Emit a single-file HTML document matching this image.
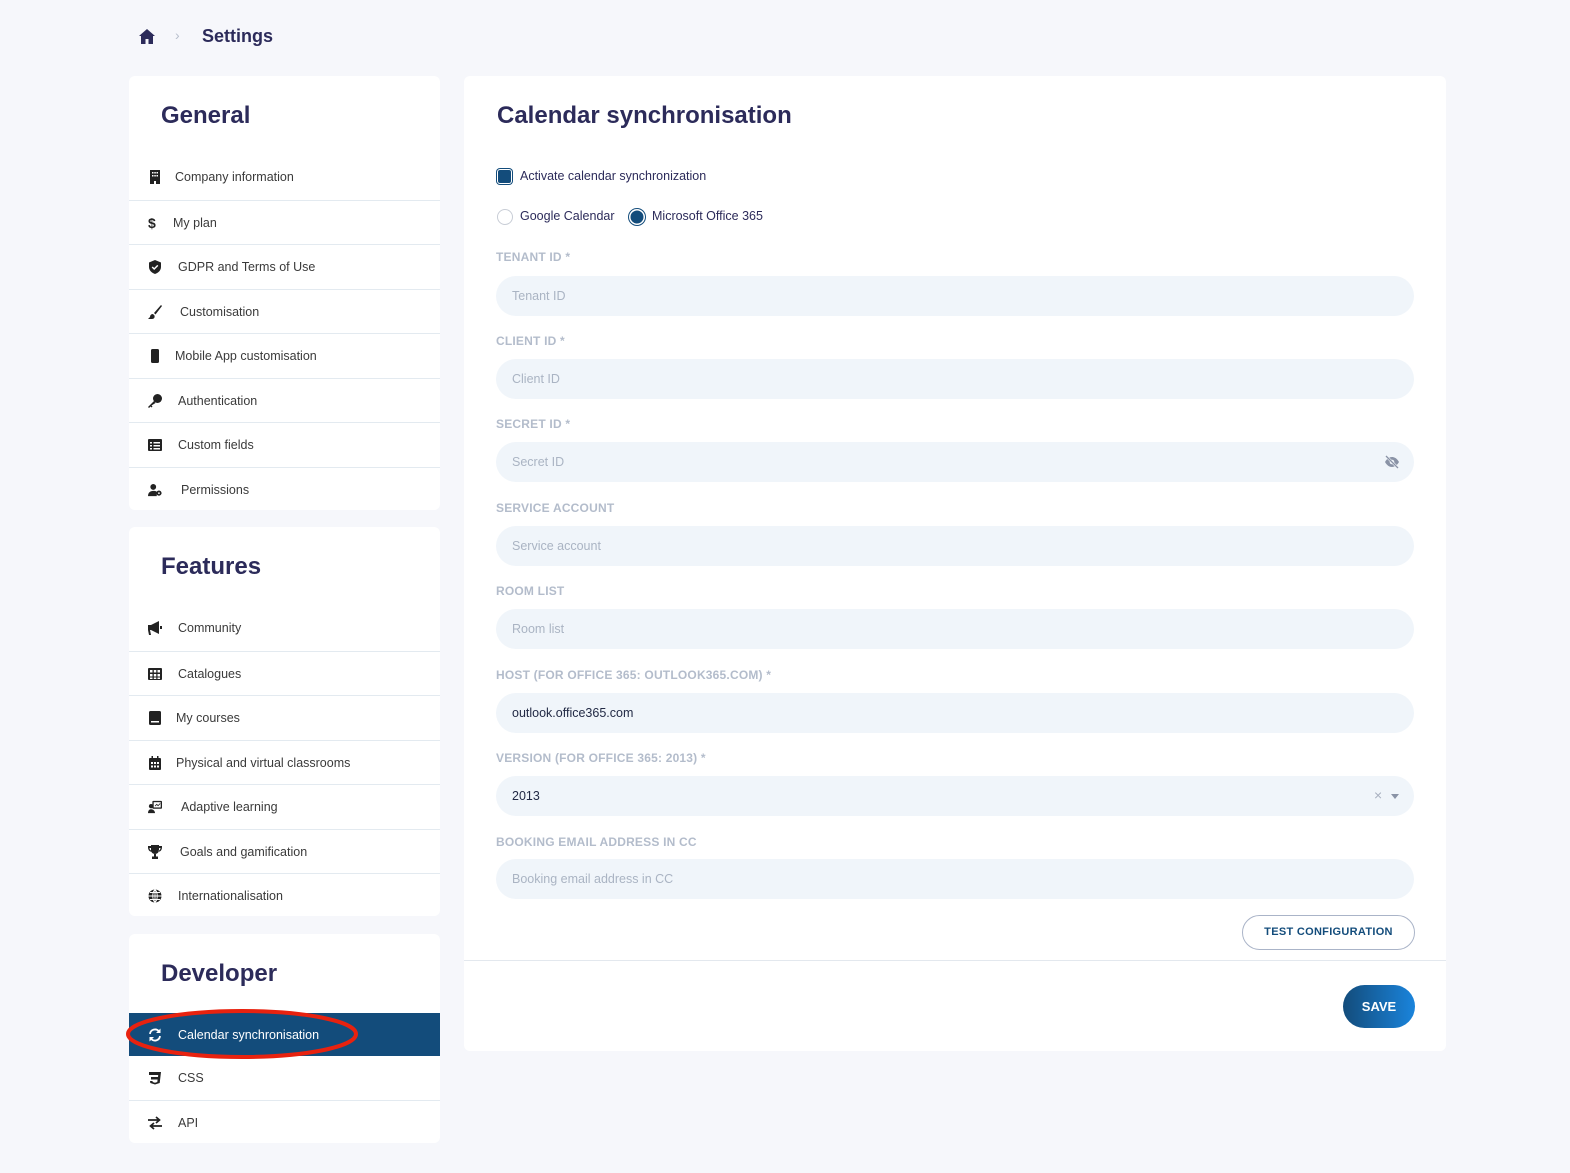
<!DOCTYPE html>
<html><head><meta charset="utf-8"><style>
*{box-sizing:border-box;margin:0;padding:0}
body{width:1570px;height:1173px;background:#f6f7fb;font-family:"Liberation Sans",sans-serif;position:relative;overflow:hidden}
.abs{position:absolute}
.card{position:absolute;background:#fff;border-radius:6px}
.ttl{position:absolute;font-weight:bold;font-size:24px;color:#2c2b5a}
.item{position:absolute;left:0;width:311px;height:44px;border-top:1px solid #e3eaf0;font-size:12.5px;color:#3a3a3a;display:flex;align-items:center}
.item.first{border-top:none}
.item svg{position:absolute;left:19px;width:14px;height:14px}
.item span{position:absolute}
.lbl{position:absolute;left:496px;font-size:12px;font-weight:bold;color:#b3bccb;letter-spacing:.2px}
.inp{position:absolute;left:496px;width:918px;height:40px;background:#f0f5fa;border-radius:20px;font-size:12.5px;color:#aab4c3;padding-left:16px;line-height:40px}
.inp.v{color:#222a45}
</style></head><body>
<svg class="abs" style="left:139px;top:29px" width="16" height="15" viewBox="0 0 16 15"><path d="M8 0L0 7h2v8h4.5v-5h3v5H14V7h2z" fill="#2c2b5a"/></svg>
<div class="abs" style="left:175px;top:27px;color:#b8bfcc;font-size:14px">›</div>
<div class="abs" style="left:202px;top:26px;font-size:18px;font-weight:bold;color:#2c2b5a">Settings</div>

<div class="card" style="left:129px;top:76px;width:311px;height:434px">
<div class="ttl" style="left:32px;top:26px">General</div>
<div class="item first" style="top:79px"><svg viewBox="0 0 14 14"><path d="M2 0h10v14H8v-3H6v3H2z" fill="#222"/><path d="M4 2h1.5v1.5H4zM6.3 2h1.5v1.5H6.3zM8.5 2H10v1.5H8.5zM4 5h1.5v1.5H4zM6.3 5h1.5v1.5H6.3zM8.5 5H10v1.5H8.5z" fill="#fff"/></svg><span style="left:46px">Company information</span></div>
<div class="item" style="top:124px"><span style="left:19px;font-weight:bold;font-size:14px;color:#222">$</span><span style="left:44px">My plan</span></div>
<div class="item" style="top:168px"><svg viewBox="0 0 14 14"><path d="M7 0L1 2.5V7c0 3.5 3 6 6 7 3-1 6-3.5 6-7V2.5z" fill="#222"/><path d="M4.2 7l2 2 3.6-3.6" stroke="#fff" stroke-width="1.5" fill="none"/></svg><span style="left:49px">GDPR and Terms of Use</span></div>
<div class="item" style="top:213px"><svg viewBox="0 0 14 14"><path d="M13 0L6 8l1.5 1.5L14 1zM5 9c-2 0-3 1.5-3 3L0 14h4c2 0 3-1.5 2.5-3.5z" fill="#222"/></svg><span style="left:51px">Customisation</span></div>
<div class="item" style="top:257px"><svg viewBox="0 0 14 14"><rect x="3" y="0" width="8" height="14" rx="1.5" fill="#222"/></svg><span style="left:46px">Mobile App customisation</span></div>
<div class="item" style="top:302px"><svg viewBox="0 0 14 14"><circle cx="9.5" cy="4.5" r="4.5" fill="#222"/><path d="M6 7L0 13l1 1 1.5-1.5 1 1 1-1-1-1L7.5 9z" fill="#222"/></svg><span style="left:49px">Authentication</span></div>
<div class="item" style="top:346px"><svg viewBox="0 0 14 14"><rect x="0" y="1" width="14" height="12" rx="1" fill="#222"/><path d="M2 4h2v1.5H2zM5.5 4H12v1.5H5.5zM2 7h2v1.5H2zM5.5 7H12v1.5H5.5zM2 10h2v1.5H2zM5.5 10H12v1.5H5.5z" fill="#fff"/></svg><span style="left:49px">Custom fields</span></div>
<div class="item" style="top:391px"><svg viewBox="0 0 16 14"><circle cx="6" cy="3.5" r="3.3" fill="#222"/><path d="M0 14c0-4 2.5-6 6-6s4 1 4 1v5z" fill="#222"/><circle cx="12.5" cy="10.5" r="3" fill="#222"/><circle cx="12.5" cy="10.5" r="1" fill="#fff"/></svg><span style="left:52px">Permissions</span></div>
</div>

<div class="card" style="left:129px;top:527px;width:311px;height:389px">
<div class="ttl" style="left:32px;top:26px">Features</div>
<div class="item first" style="top:79px"><svg viewBox="0 0 14 14"><path d="M0 4h3l8-4v13L3 9H2l1 5H1L0 9z" fill="#222"/><rect x="12" y="5" width="2" height="3" fill="#222"/></svg><span style="left:49px">Community</span></div>
<div class="item" style="top:124px"><svg viewBox="0 0 14 14"><rect x="0" y="1" width="14" height="12" rx="1" fill="#222"/><path d="M2 3h2.5v2.5H2zM5.8 3h2.5v2.5H5.8zM9.5 3H12v2.5H9.5zM2 7h2.5v2.5H2zM5.8 7h2.5v2.5H5.8zM9.5 7H12v2.5H9.5zM2 10.5h2.5v1.5H2zM5.8 10.5h2.5v1.5H5.8zM9.5 10.5H12v1.5H9.5z" fill="#fff"/></svg><span style="left:49px">Catalogues</span></div>
<div class="item" style="top:168px"><svg viewBox="0 0 14 14"><rect x="1" y="0" width="12" height="14" rx="1.5" fill="#222"/><rect x="3" y="10" width="8" height="1.5" fill="#fff"/></svg><span style="left:47px">My courses</span></div>
<div class="item" style="top:213px"><svg viewBox="0 0 14 14"><rect x="1" y="2" width="12" height="12" rx="1" fill="#222"/><path d="M3.5 0h1.5v3H3.5zM9 0h1.5v3H9z" fill="#222"/><path d="M3 6h2v2H3zM6 6h2v2H6zM9 6h2v2H9zM3 9.5h2v2H3zM6 9.5h2v2H6zM9 9.5h2v2H9z" fill="#fff"/></svg><span style="left:47px">Physical and virtual classrooms</span></div>
<div class="item" style="top:257px"><svg viewBox="0 0 16 14"><rect x="5" y="0" width="11" height="9" rx="1" fill="#222"/><rect x="6.5" y="1.5" width="8" height="6" fill="#fff"/><path d="M8 6l2-2 1.5 1.5L14 3" stroke="#222" fill="none"/><circle cx="3.5" cy="6" r="2.5" fill="#222"/><path d="M0 14c0-3 1.5-4.5 3.5-4.5S8 11 8 14z" fill="#222"/></svg><span style="left:52px">Adaptive learning</span></div>
<div class="item" style="top:302px"><svg viewBox="0 0 14 14"><path d="M3 0h8v5c0 2.5-2 4-4 4S3 7.5 3 5zM0 1h3v2H1.5c0 1.5 1 2.5 2 2.5v1.2C1.5 6.7 0 5 0 2zM14 1h-3v2h1.5c0 1.5-1 2.5-2 2.5v1.2c2 0 3.5-1.7 3.5-4.7zM6 9h2v2.5h2V14H4v-2.5h2z" fill="#222"/></svg><span style="left:51px">Goals and gamification</span></div>
<div class="item" style="top:346px"><svg viewBox="0 0 14 14"><circle cx="7" cy="7" r="6.5" fill="#222"/><path d="M0.5 7h13M7 .5v13M7 .5c-3 3-3 10 0 13M7 .5c3 3 3 10 0 13M2 3.5h10M2 10.5h10" stroke="#fff" stroke-width=".9" fill="none"/></svg><span style="left:49px">Internationalisation</span></div>
</div>

<div class="card" style="left:129px;top:934px;width:311px;height:209px">
<div class="ttl" style="left:32px;top:26px">Developer</div>
<div class="item first" style="top:79px;height:43px;background:#134c7b;color:#fff"><svg viewBox="0 0 14 14"><path d="M2 6a5 5 0 0 1 9-2.5M12 8a5 5 0 0 1-9 2.5" stroke="#fff" stroke-width="1.8" fill="none"/><path d="M12.5 0.5v4.5H8zM1.5 13.5V9H6z" fill="#fff"/></svg><span style="left:49px">Calendar synchronisation</span></div>
<div class="item first" style="top:122px"><svg viewBox="0 0 14 14"><path d="M1 1h12l-1.3 11L7 13.5 2.3 12 2 10h2.5l.2 1 2.3.7 2.3-.7.3-2.5H3V6h7l.2-2H1z" fill="#222"/></svg><span style="left:49px">CSS</span></div>
<div class="item" style="top:166px"><svg viewBox="0 0 14 14"><path d="M0 4h11M8 1l3.5 3L8 7M14 10H3M6 7l-3.5 3L6 13" stroke="#222" stroke-width="1.7" fill="none"/></svg><span style="left:49px">API</span></div>
</div>
<svg class="abs" style="left:125px;top:1005px" width="240" height="60"><ellipse cx="117" cy="29" rx="114" ry="23" fill="none" stroke="#e8220f" stroke-width="4"/></svg>

<div class="card" style="left:464px;top:76px;width:982px;height:975px"></div>
<div class="abs" style="left:497px;top:102px;font-size:24px;font-weight:bold;color:#2c2b5a">Calendar synchronisation</div>
<div class="abs" style="left:497px;top:169px;width:15px;height:15px;border-radius:3px;background:#134c7b;box-shadow:0 0 0 1px #fff inset, 0 0 0 1px #134c7b"></div>
<div class="abs" style="left:520px;top:169px;font-size:12.5px;color:#2c2b5a">Activate calendar synchronization</div>
<div class="abs" style="left:497px;top:209px;width:16px;height:16px;border-radius:50%;border:1px solid #c8cdd6;background:#fff"></div>
<div class="abs" style="left:520px;top:209px;font-size:12.5px;color:#2c2b5a">Google Calendar</div>
<div class="abs" style="left:629px;top:209px;width:16px;height:16px;border-radius:50%;background:#134c7b;box-shadow:0 0 0 1.5px #fff inset, 0 0 0 1px #134c7b"></div>
<div class="abs" style="left:652px;top:209px;font-size:12.5px;color:#2c2b5a">Microsoft Office 365</div>

<div class="lbl" style="top:250px">TENANT ID *</div><div class="inp" style="top:276px">Tenant ID</div>
<div class="lbl" style="top:334px">CLIENT ID *</div><div class="inp" style="top:359px">Client ID</div>
<div class="lbl" style="top:417px">SECRET ID *</div><div class="inp" style="top:442px">Secret ID</div>
<svg class="abs" style="left:1384px;top:455px" width="16" height="14" viewBox="0 0 16 14"><path d="M1 7c2-3.5 4.5-5 7-5s5 1.5 7 5c-2 3.5-4.5 5-7 5S3 10.5 1 7z" fill="#8a93a6"/><circle cx="8" cy="7" r="2.3" fill="#f0f5fa"/><path d="M2 1l12 12" stroke="#f0f5fa" stroke-width="2.5"/><path d="M2 1l12 12" stroke="#8a93a6" stroke-width="1.3"/></svg>
<div class="lbl" style="top:501px">SERVICE ACCOUNT</div><div class="inp" style="top:526px">Service account</div>
<div class="lbl" style="top:584px">ROOM LIST</div><div class="inp" style="top:609px">Room list</div>
<div class="lbl" style="top:668px">HOST (FOR OFFICE 365: OUTLOOK365.COM) *</div><div class="inp v" style="top:693px">outlook.office365.com</div>
<div class="lbl" style="top:751px">VERSION (FOR OFFICE 365: 2013) *</div><div class="inp v" style="top:776px">2013</div>
<div class="abs" style="left:1374px;top:787px;font-size:14px;color:#a8b0bf">×</div>
<div class="abs" style="left:1391px;top:794px;width:0;height:0;border-left:4px solid transparent;border-right:4px solid transparent;border-top:5px solid #8a93a6"></div>
<div class="lbl" style="top:835px">BOOKING EMAIL ADDRESS IN CC</div><div class="inp" style="top:859px">Booking email address in CC</div>

<div class="abs" style="left:1242px;top:915px;width:173px;height:35px;border:1px solid #aab4c8;border-radius:18px;text-align:center;line-height:33px;font-size:11px;font-weight:bold;color:#134c7b;letter-spacing:.3px">TEST CONFIGURATION</div>
<div class="abs" style="left:464px;top:960px;width:982px;height:1px;background:#e3e8ee"></div>
<div class="abs" style="left:1343px;top:985px;width:72px;height:43px;border-radius:22px;background:linear-gradient(90deg,#134c7b,#1a84dc);color:#fff;font-weight:bold;font-size:13px;text-align:center;line-height:43px">SAVE</div>
</body></html>
